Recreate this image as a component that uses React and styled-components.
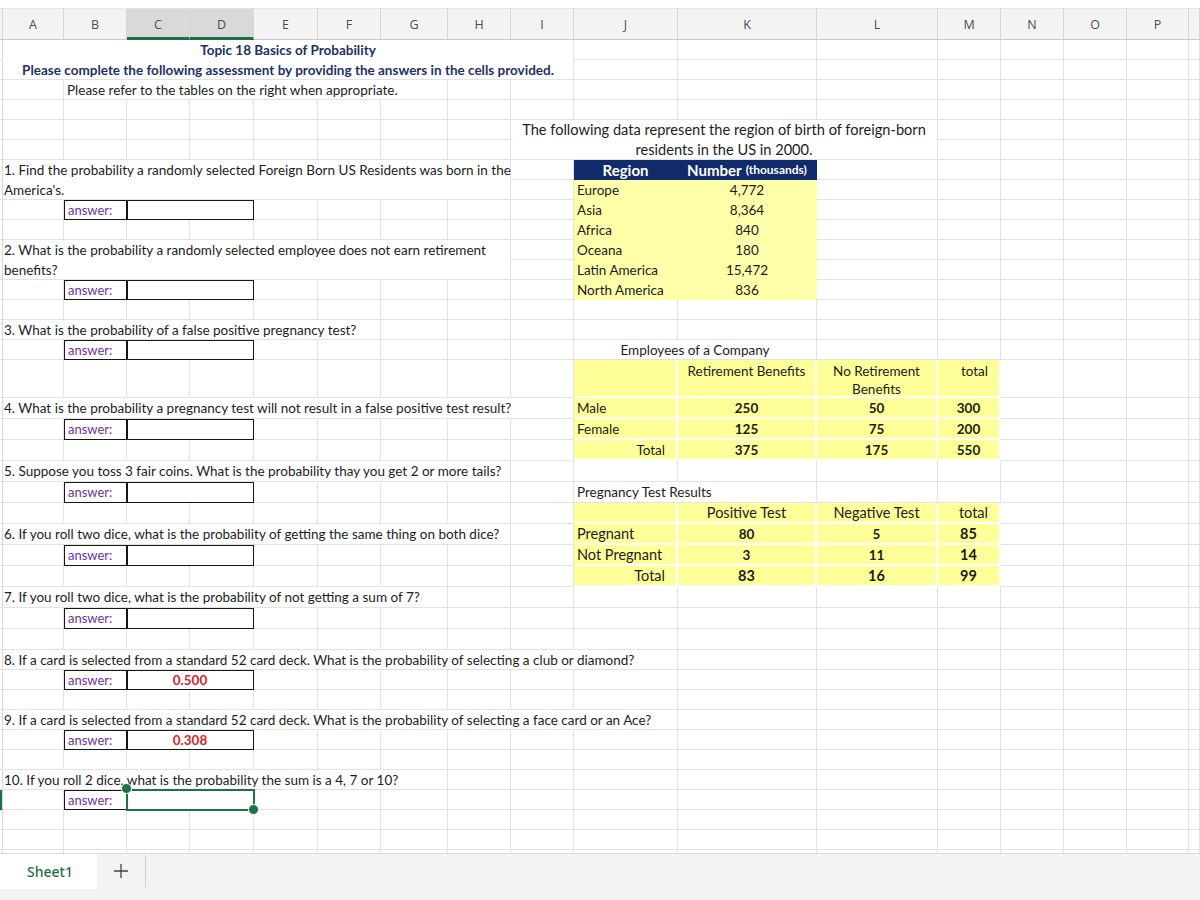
import React from 'react'
import styled, { createGlobalStyle, css } from 'styled-components'

const GlobalStyle = createGlobalStyle`
  html, body {
    margin: 0;
    padding: 0;
    background: #fff;
  }
  body {
    font-family: Lato, "Open Sans", sans-serif;
  }
  #root {
    width: 1200px;
    height: 900px;
    overflow: hidden;
  }
`

// column letter + pixel width ('' is the collapsed row-header gutter, Q is the clipped last column)
const COLUMNS = [
  ['', 3], ['A', 61], ['B', 63], ['C', 63], ['D', 64], ['E', 64], ['F', 63], ['G', 67], ['H', 63],
  ['I', 63], ['J', 104], ['K', 139], ['L', 121], ['M', 63], ['N', 63], ['O', 63], ['P', 62], ['Q', 0],
]
const TEMPLATE = COLUMNS.map(([, w]) => (w ? `${w}px` : '1fr')).join(' ')
const LETTERS = COLUMNS.map(([l]) => l)
const idx = (l) => LETTERS.indexOf(l)

const ROW_HEIGHTS = [
  ...Array(16).fill(20), 38, ...Array(12).fill(21), ...Array(11).fill(20),
]

const SELECTED_COLS = ['C', 'D']
const SELECTED_ROW = 37

const answer = (value = '', selected = false) => [
  ['B', 'B', 'label', 'answer:'],
  ['C', 'D', 'value', value, { $selected: selected }],
]

const SHEET = {
  1: [['A', 'I', 'title', 'Topic 18 Basics of Probability', { $open: true }]],
  2: [['A', 'I', 'title', 'Please complete the following assessment by providing the answers in the cells provided.']],
  3: [['B', 'G', 'note', 'Please refer to the tables on the right when appropriate.']],
  5: [['I', 'L', 'caption', 'The following data represent the region of birth of foreign-born', { $open: true, $big: true }]],
  6: [['I', 'L', 'caption', 'residents in the US in 2000.', { $big: true }]],
  7: [
    ['A', 'H', 'q', '1. Find the probability a randomly selected Foreign Born US Residents was born in the', { $open: true }],
    ['J', 'J', 'head', 'Region'],
    ['K', 'K', 'head', 'number'],
  ],
  8: [['A', 'H', 'q', "America's."], ['J', 'J', 'reg', 'Europe'], ['K', 'K', 'reg', '4,772', { $align: 'center' }]],
  9: [...answer(), ['J', 'J', 'reg', 'Asia'], ['K', 'K', 'reg', '8,364', { $align: 'center' }]],
  10: [['J', 'J', 'reg', 'Africa'], ['K', 'K', 'reg', '840', { $align: 'center' }]],
  11: [
    ['A', 'H', 'q', '2. What is the probability a randomly selected employee does not earn retirement', { $open: true }],
    ['J', 'J', 'reg', 'Oceana'],
    ['K', 'K', 'reg', '180', { $align: 'center' }],
  ],
  12: [['A', 'H', 'q', 'benefits?'], ['J', 'J', 'reg', 'Latin America'], ['K', 'K', 'reg', '15,472', { $align: 'center' }]],
  13: [...answer(), ['J', 'J', 'reg', 'North America'], ['K', 'K', 'reg', '836', { $align: 'center' }]],
  15: [['A', 'F', 'q', '3. What is the probability of a false positive pregnancy test?']],
  16: [...answer(), ['J', 'K', 'caption', 'Employees of a Company']],
  17: [
    ['J', 'J', 'tbl', ''],
    ['K', 'K', 'tbl', 'Retirement Benefits', { $align: 'center', $top: true }],
    ['L', 'L', 'tbl', <>No Retirement<br />Benefits</>, { $align: 'center', $top: true }],
    ['M', 'M', 'tbl', 'total', { $align: 'right', $top: true }],
  ],
  18: [
    ['A', 'I', 'q', '4. What is the probability a pregnancy test will not result in a false positive test result?'],
    ['J', 'J', 'tbl', 'Male'],
    ['K', 'K', 'tbl', '250', { $align: 'center', $bold: true }],
    ['L', 'L', 'tbl', '50', { $align: 'center', $bold: true }],
    ['M', 'M', 'tbl', '300', { $align: 'center', $bold: true }],
  ],
  19: [
    ...answer(),
    ['J', 'J', 'tbl', 'Female'],
    ['K', 'K', 'tbl', '125', { $align: 'center', $bold: true }],
    ['L', 'L', 'tbl', '75', { $align: 'center', $bold: true }],
    ['M', 'M', 'tbl', '200', { $align: 'center', $bold: true }],
  ],
  20: [
    ['J', 'J', 'tbl', 'Total', { $align: 'right' }],
    ['K', 'K', 'tbl', '375', { $align: 'center', $bold: true }],
    ['L', 'L', 'tbl', '175', { $align: 'center', $bold: true }],
    ['M', 'M', 'tbl', '550', { $align: 'center', $bold: true }],
  ],
  21: [['A', 'H', 'q', '5. Suppose you toss 3 fair coins. What is the probability thay you get 2 or more tails?']],
  22: [...answer(), ['J', 'K', 'note', 'Pregnancy Test Results']],
  23: [
    ['J', 'J', 'tbl', ''],
    ['K', 'K', 'tbl', 'Positive Test', { $align: 'center', $big: true }],
    ['L', 'L', 'tbl', 'Negative Test', { $align: 'center', $big: true }],
    ['M', 'M', 'tbl', 'total', { $align: 'right', $big: true }],
  ],
  24: [
    ['A', 'H', 'q', '6. If you roll two dice, what is the probability of getting the same thing on both dice?'],
    ['J', 'J', 'tbl', 'Pregnant', { $big: true }],
    ['K', 'K', 'tbl', '80', { $align: 'center', $bold: true }],
    ['L', 'L', 'tbl', '5', { $align: 'center', $bold: true }],
    ['M', 'M', 'tbl', '85', { $align: 'center', $bold: true, $big: true }],
  ],
  25: [
    ...answer(),
    ['J', 'J', 'tbl', 'Not Pregnant', { $big: true }],
    ['K', 'K', 'tbl', '3', { $align: 'center', $bold: true }],
    ['L', 'L', 'tbl', '11', { $align: 'center', $bold: true }],
    ['M', 'M', 'tbl', '14', { $align: 'center', $bold: true, $big: true }],
  ],
  26: [
    ['J', 'J', 'tbl', 'Total', { $align: 'right', $big: true }],
    ['K', 'K', 'tbl', '83', { $align: 'center', $bold: true, $big: true }],
    ['L', 'L', 'tbl', '16', { $align: 'center', $bold: true, $big: true }],
    ['M', 'M', 'tbl', '99', { $align: 'center', $bold: true, $big: true }],
  ],
  27: [['A', 'G', 'q', '7. If you roll two dice, what is the probability of not getting a sum of 7?']],
  28: answer(),
  30: [['A', 'J', 'q', '8. If a card is selected from a standard 52 card deck. What is the probability of selecting a club or diamond?']],
  31: answer('0.500'),
  33: [['A', 'J', 'q', '9. If a card is selected from a standard 52 card deck. What is the probability of selecting a face card or an Ace?']],
  34: answer('0.308'),
  36: [['A', 'G', 'q', '10. If you roll 2 dice, what is the probability the sum is a 4, 7 or 10?']],
  37: answer('', true),
}

/* ---------- frame ---------- */

const Page = styled.div`
  width: 1200px;
  height: 900px;
  display: flex;
  flex-direction: column;
  background: #fff;
  overflow: hidden;
`

const TopStrip = styled.div`
  height: 9px;
  flex: none;
  background: #fff;
  border-bottom: 1px solid #e3e3e3;
  box-sizing: border-box;
`

const HeaderRow = styled.div`
  flex: none;
  height: 31px;
  display: grid;
  grid-template-columns: ${TEMPLATE};
  background: #f3f3f3;
`

const ColHead = styled.div`
  display: flex;
  align-items: center;
  justify-content: center;
  box-sizing: border-box;
  border-right: 1px solid #d6d6d6;
  border-bottom: ${(p) => (p.$selected ? '3px solid #1e7145' : '1px solid #c8c8c8')};
  background: ${(p) => (p.$selected ? '#d9d9d9' : '#f3f3f3')};
  font-family: "Open Sans", "Noto Sans", sans-serif;
  font-size: 12.5px;
  color: #4d4d4d;
  padding-top: ${(p) => (p.$selected ? '2px' : '0')};
`

const Body = styled.div`
  flex: none;
  height: 813px;
  overflow: hidden;
  display: grid;
  grid-template-columns: ${TEMPLATE};
  grid-template-rows: ${ROW_HEIGHTS.map((h) => `${h}px`).join(' ')};
`

/* ---------- cells ---------- */

const Cell = styled.div`
  grid-column: span ${(p) => p.$span || 1};
  box-sizing: border-box;
  min-width: 0;
  display: flex;
  align-items: ${(p) => (p.$top ? 'flex-start' : 'center')};
  justify-content: ${(p) =>
    p.$align === 'center' ? 'center' : p.$align === 'right' ? 'flex-end' : 'flex-start'};
  text-align: ${(p) => p.$align || 'left'};
  padding: 0 3px;
  background: #fff;
  border-right: 1px solid #e2e2e2;
  border-bottom: 1px solid ${(p) => (p.$open ? '#fff' : '#e2e2e2')};
  font-size: 13.5px;
  line-height: 18px;
  color: #1c1c1c;
  white-space: nowrap;
`

const Gutter = styled.div`
  box-sizing: border-box;
  background: ${(p) => (p.$active ? '#1e7145' : '#fff')};
  border-right: 1px solid #d8d8d8;
  border-bottom: 1px solid ${(p) => (p.$active ? '#1e7145' : '#e2e2e2')};
`

const Title = styled(Cell)`
  justify-content: center;
  color: #1f3068;
  font-weight: 700;
`

const Note = styled(Cell)`
  position: relative;
  z-index: 1;
`

const Caption = styled(Cell)`
  justify-content: center;
  font-size: ${(p) => (p.$big ? '14.6px' : '13.5px')};
`

const Question = styled(Cell)`
  padding-left: 1px;
  position: relative;
  z-index: 1;
`

const boxed = css`
  border-right: 1px solid #161616;
  border-bottom: 1px solid #161616;
  box-shadow: inset 1px 1px 0 #161616;
`

const AnswerLabel = styled(Cell)`
  ${boxed};
  color: #7030a0;
  font-size: 13px;
  padding-left: 4px;
`

const AnswerValue = styled(Cell)`
  ${boxed};
  justify-content: center;
  color: #d9262b;
  font-weight: 700;
  ${(p) =>
    p.$selected &&
    css`
      position: relative;
      z-index: 3;
      overflow: visible;
      border-color: #1e7145;
      box-shadow: 0 0 0 1px #1e7145, inset 1px 1px 0 #1e7145;
    `}
`

const Handle = styled.span`
  position: absolute;
  width: 9px;
  height: 9px;
  border-radius: 50%;
  background: #1e7145;
  border: 1px solid #fff;
  ${(p) => (p.$corner === 'tl' ? 'top: -7px; left: -6px;' : 'bottom: -6px; right: -6px;')}
`

const RegionHead = styled(Cell)`
  justify-content: center;
  background: #112a6b;
  border-right-color: #112a6b;
  border-bottom-color: #112a6b;
  color: #fff;
  font-weight: 700;
  font-size: 15px;
`

const Small = styled.span`
  font-size: 12px;
  margin-left: 4px;
`

const RegionCell = styled(Cell)`
  background: #ffffaa;
  border-right-color: #ffffaa;
  border-bottom-color: #ffffaa;
  font-size: 13.5px;
`

const TableCell = styled(Cell)`
  background: #ffff99;
  border-right: 2px solid #fff;
  border-bottom: 2px solid #fff;
  font-weight: ${(p) => (p.$bold ? 700 : 400)};
  font-size: ${(p) => (p.$big ? '14.5px' : '13.5px')};
  padding: ${(p) => (p.$top ? '2px 3px 0' : '0 3px')};
  padding-right: ${(p) => (p.$align === 'right' ? '11px' : '3px')};
`

const AnswerBox = ({ $selected, children, ...rest }) => (
  <AnswerValue $selected={$selected} {...rest}>
    {children}
    {$selected && <Handle $corner="tl" />}
    {$selected && <Handle $corner="br" />}
  </AnswerValue>
)

const NumberHead = ({ ...rest }) => (
  <RegionHead {...rest}>
    Number<Small>(thousands)</Small>
  </RegionHead>
)

const KINDS = {
  title: Title,
  note: Note,
  caption: Caption,
  q: Question,
  label: AnswerLabel,
  value: AnswerBox,
  head: RegionHead,
  reg: RegionCell,
  tbl: TableCell,
}

/* ---------- tab bar ---------- */

const TabBar = styled.div`
  flex: none;
  height: 47px;
  display: flex;
  align-items: flex-start;
  background: #f3f3f3;
  border-top: 1px solid #dcdcdc;
  box-sizing: border-box;
`

const SheetTab = styled.div`
  width: 97px;
  height: 35px;
  display: flex;
  align-items: center;
  justify-content: center;
  padding-left: 3px;
  box-sizing: border-box;
  background: #fff;
  color: #1e7145;
  font-family: "Noto Sans", "Open Sans", sans-serif;
  font-size: 14px;
  font-weight: 500;
`

const AddSheet = styled.div`
  width: 48px;
  height: 32px;
  margin-top: 1px;
  display: flex;
  align-items: center;
  justify-content: center;
  border-right: 1px solid #cfcfcf;
  color: #444;
`

const renderRow = (n) => {
  const specs = SHEET[n] || []
  const out = [<Gutter key={`${n}-g`} $active={n === SELECTED_ROW} />]
  for (let i = 1; i < LETTERS.length; ) {
    const letter = LETTERS[i]
    const spec = specs.find((s) => s[0] === letter)
    if (!spec) {
      out.push(<Cell key={`${n}-${letter}`} />)
      i += 1
      continue
    }
    const [from, to, kind, content, opts = {}] = spec
    const span = idx(to) - idx(from) + 1
    const Comp = kind === 'head' && content === 'number' ? NumberHead : KINDS[kind]
    out.push(
      <Comp key={`${n}-${letter}`} $span={span} {...opts}>
        {content === 'number' ? null : content}
      </Comp>
    )
    i += span
  }
  return out
}

export default function App() {
  return (
    <>
      <GlobalStyle />
      <Page>
        <TopStrip />
        <HeaderRow>
          {LETTERS.map((l, i) =>
            i === 0 ? (
              <ColHead key="corner" />
            ) : (
              <ColHead key={l} $selected={SELECTED_COLS.includes(l)}>
                {l === 'Q' ? '' : l}
              </ColHead>
            )
          )}
        </HeaderRow>
        <Body>{ROW_HEIGHTS.map((_, r) => renderRow(r + 1))}</Body>
        <TabBar>
          <SheetTab>Sheet1</SheetTab>
          <AddSheet>
            <svg width="16" height="16" viewBox="0 0 16 16">
              <path d="M8 1v14M1 8h14" stroke="#444" strokeWidth="1.3" fill="none" />
            </svg>
          </AddSheet>
        </TabBar>
      </Page>
    </>
  )
}
